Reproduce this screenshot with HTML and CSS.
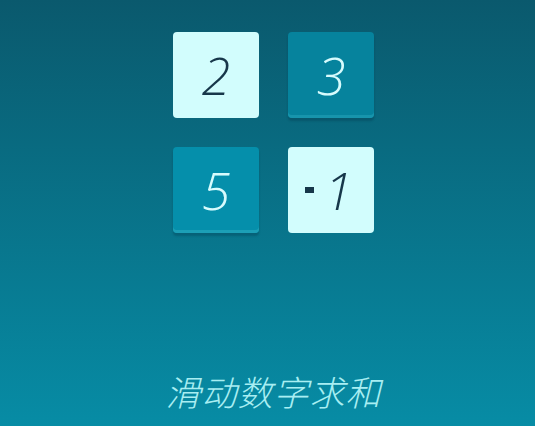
FILE: index.html
```html
<!DOCTYPE html>
<html lang="zh">
<head>
    <meta charset="UTF-8">
    <meta name="viewport" content="width=device-width, initial-scale=1.0">
    <title>滑动数字求和</title>
    <link rel="stylesheet" href="styles.css">
</head>
<body>
    <div class="game">
        <div class="board">
            <div class="tile light">2</div>
            <div class="tile dark">3</div>
            <div class="tile dark alt">5</div>
            <div class="tile light"><span class="minus"></span>1</div>
        </div>
        <p class="title">滑动数字求和</p>
    </div>
</body>
</html>
```

FILE: styles.css
```css
html, body { margin: 0; height: 100%; }
body {
    background: linear-gradient(#0a596d, #078ca5);
    font-family: "Open Sans", "Noto Sans CJK SC", sans-serif;
}
.game {
    height: 426px;
    display: flex;
    flex-direction: column;
    align-items: center;
    padding-left: 12px;
    box-sizing: border-box;
}
.board {
    margin-top: 32px;
    display: grid;
    grid-template-columns: 86px 86px;
    grid-auto-rows: 86px;
    gap: 29px;
}
.tile {
    border-radius: 4px;
    display: flex;
    align-items: center;
    justify-content: center;
    font-size: 52px;
    font-weight: 300;
    font-style: italic;
    line-height: 1;
}
.light { background: #d2fdfd; color: #17374a; }
.dark {
    background: #06839d;
    color: #d7fbfd;
    box-shadow: inset 0 -3px 0 #1794ac, 0 3px 2px rgba(0, 40, 60, 0.25);
}
.dark.alt { background: #058fab; box-shadow: inset 0 -3px 0 #1c9fb6, 0 3px 2px rgba(0, 40, 60, 0.25); }
.minus {
    display: inline-block;
    width: 9px;
    height: 6px;
    background: #17374a;
    margin-right: 10px;
    margin-left: -4px;
}
.title {
    margin: auto 0 10px;
    color: #a8eef2;
    font-family: "Noto Sans CJK SC", sans-serif;
    font-weight: 300;
    font-style: italic;
    font-size: 35px;
    letter-spacing: 1px;
}
```
